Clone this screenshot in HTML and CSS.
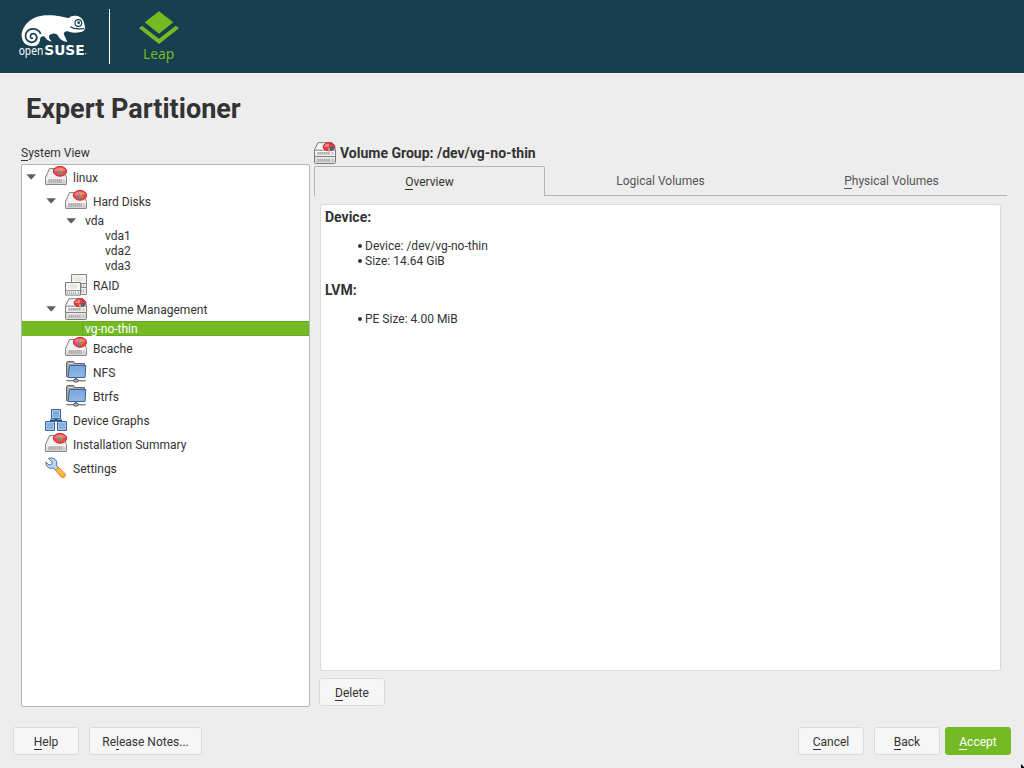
FILE: index.html
```html
<!DOCTYPE html>
<html lang="en">
<head>
<meta charset="utf-8">
<title>Expert Partitioner</title>
<link rel="stylesheet" href="styles.css">
</head>
<body>
<svg class="defs" width="0" height="0" aria-hidden="true">
  <defs>
    <linearGradient id="metal" x1="0" y1="0" x2="0" y2="1"><stop offset="0" stop-color="#fff"/><stop offset="1" stop-color="#cfcfcf"/></linearGradient>
    <linearGradient id="blue" x1="0" y1="0" x2="0" y2="1"><stop offset="0" stop-color="#78a5d8"/><stop offset="1" stop-color="#91b8e4"/></linearGradient>
    <symbol id="disk" viewBox="0 0 22 22">
      <path d="M4.500 2.500h13l4 9v6.500q0 .5-.5.500H1q-.5 0-.5-.500v-6.500z" fill="#e6e6e6" stroke="#858585"/>
      <path d="M5.300 3.500h11.500l3.200 7.500H1.900z" fill="#f3f3f3"/>
      <path d="M1 11.800h20v6H1z" fill="url(#metal)"/>
      <path d="M3 13h14v4H3zM18 13h1.500v4H18z" fill="#c3c3c3"/>
      <path d="M4.500 13v4M6.500 13v4M8.500 13v4M10.500 13v4M12.500 13v4M14.500 13v4M16.500 13v4" stroke="#a9a9a9" stroke-width=".7"/>
      <ellipse cx="15" cy="5.300" rx="6.600" ry="4.900" fill="#ea4a4c" stroke="#cc2428"/>
      <path d="M9.300 5q.5-3.200 5.700-3.500 5 .3 5.700 3.100-5 1.300-11.400.4z" fill="#f27a7a"/>
      <path d="M15 5l.4-3.300 1.800.6-.4 3z" fill="#e8a052"/>
      <path d="M12.500 5.600l2.500-.8v3.500l-2.500.2z" fill="#6a84bd"/>
      <path d="M15.300 4.600l3 1.900-3 1.800z" fill="#76a950"/>
    </symbol>
    <symbol id="volumes" viewBox="0 0 22 22">
      <path d="M4 .7h14l3.500 6.800v13q0 1-1 1h-19q-1 0-1-1v-13z" fill="#e8e8e8" stroke="#7c7c7c"/>
      <path d="M4.500 1.500h13l2.800 6H1.700z" fill="#f5f5f5"/>
      <path d="M1 8.500h20v5H1zM1 15.500h20v5H1z" fill="url(#metal)"/>
      <path d="M.5 8.200h21M.5 14.500h21" stroke="#858585"/>
      <path d="M3 10h13v2.500H3zM17.500 10h2v2.500h-2zM3 17h13v2.500H3zM17.500 17h2v2.500h-2z" fill="#c3c3c3"/>
      <path d="M4.500 10v2.500M6.500 10v2.500M8.500 10v2.500M10.500 10v2.500M12.500 10v2.500M14.500 10v2.500M4.500 17v2.500M6.500 17v2.500M8.500 17v2.500M10.500 17v2.500M12.500 17v2.500M14.500 17v2.500" stroke="#a5a5a5" stroke-width=".7"/>
      <ellipse cx="15" cy="4.800" rx="5.900" ry="4" fill="#e63a3d" stroke="#c81e22"/>
      <path d="M10 5q.5-3 5-3.400V5z" fill="#f58282"/>
      <path d="M15 5l1.500 3.700q3.500-.6 4-3.700z" fill="#3465a4"/>
      <path d="M15 5l1.500 3.700h-3z" fill="#e9a43c"/>
    </symbol>
    <symbol id="raid" viewBox="0 0 22 22">
      <path d="M6.500.5h15v20h-15z" fill="#eee" stroke="#888"/>
      <path d="M7 13.500h14.500M7 9.500h14.500" stroke="#888"/>
      <path d="M8 1.500h12.500V9H8z" fill="#f7f7f5"/>
      <ellipse cx="14" cy="5" rx="5" ry="2.800" fill="#e9e9e4"/>
      <path d="M16.500 10.700v1.800M18.500 10.700v1.800M16.500 15.500v3M18.500 15.500v3" stroke="#aaa"/>
      <path d="M.5 8.500h15v12.600H.5z" fill="#efefef" stroke="#7d7d7d"/>
      <path d="M2 9.500h12l.5 6.500h-13z" fill="#fafaf8"/>
      <ellipse cx="8" cy="12.500" rx="5" ry="2.500" fill="#e7e7e2"/>
      <path d="M1 16.500h14" stroke="#999"/>
      <path d="M2.500 17.500v2.500M4.500 17.500v2.500M6.500 17.500v2.500M8.500 17.500v2.500M10.500 17.500v2.500M13.500 17.500v2.500" stroke="#aaa"/>
    </symbol>
    <symbol id="folder" viewBox="0 0 22 22">
      <path d="M1.500 15.500v-14l1-1h6l1.500 2h9.500v13z" fill="#a3a3a0" stroke="#656565"/>
      <path d="M3 2.500h5M3 4.500h15" stroke="#d5d5d2"/>
      <path d="M4.500 4.500h16.300l-.8 12H3z" fill="url(#blue)" stroke="#3465a4"/>
      <path d="M10.500 17v2" stroke="#555"/>
      <path d="M1 19.500h20" stroke="#888"/>
      <path d="M2 20.500h18" stroke="#ccc"/>
      <ellipse cx="11" cy="19.500" rx="2.500" ry="1.500" fill="#bbb" stroke="#444"/>
    </symbol>
    <symbol id="graph" viewBox="0 0 22 22">
      <path d="M11 9v3M6 13.500v-2h10v2" fill="none" stroke="#27446b" stroke-width="2"/>
      <path d="M6.500.5h9v9h-9zM.5 12.500h9v9h-9zM12.500 12.500h9v9h-9z" fill="#86aedb" stroke="#3465a4"/>
      <path d="M7.500 1.500h7v7h-7zM1.500 13.500h7v7h-7zM13.500 13.500h7v7h-7z" fill="none" stroke="#b4cfee" stroke-width=".8"/>
    </symbol>
    <symbol id="tools" viewBox="0 0 22 22">
      <path d="M3.500 1.500L7.200 5 6.500 7.500 4 8 .8 5Q.5 9 3.500 10.800q2 1.200 4.700.2l3.300 3 2.500-2.500-2.500-3.200Q12.500 3.500 9 1.500 6.500.3 3.500 1.500z" fill="#bad3ef" stroke="#4a78ae"/>
      <path d="M10.300 13.200l3.200-2.800 6.200 5.800q1.600 2.200-.1 3.800-1.900 1.400-3.600-.2z" fill="#fcaf3e" stroke="#e58a0c"/>
      <path d="M13 13.500l4.700 4.700M15 13l4 4" stroke="#ffd98c" stroke-dasharray="1.500 1"/>
    </symbol>
    <symbol id="arrow" viewBox="0 0 10 6"><path d="M.4.300h9.600L5.700 5.200h-1z" fill="#606060"/></symbol>
  </defs>
</svg>

<header class="banner">
  <svg class="brand" viewBox="0 0 600 219">
    <path d="M65 111C63 78 94 48 137 46 168 44 187 51 207 54 212 47 222 46 232 48 245 51 253 63 254 77L256 85Q253 94 243 96 218 101 203 94 193 93 191 101L202 126Q181 123 172 104 161 96 148 105L147 114 155 125Q141 124 133 109 124 107 121 113 121 138 98 139 69 138 65 111z" fill="#fff"/>
    <path d="M122 102C115 84 88 80 78 100 72 121 91 133 106 123 116 112 107 97 95 102 87 109 92 117 99 114" fill="none" stroke="#173f4f" stroke-width="5"/>
    <circle cx="235" cy="69" r="10" fill="#fff" stroke="#173f4f" stroke-width="3.500"/>
    <circle cx="236" cy="68" r="4" fill="#173f4f"/>
    <path d="M211 80q14 10 42 5" fill="none" stroke="#173f4f" stroke-width="3.500"/>
    <text class="word-open" x="56" y="164" textLength="74" lengthAdjust="spacingAndGlyphs">open</text>
    <text class="word-suse" x="133" y="164" textLength="121" lengthAdjust="spacingAndGlyphs">SUSE</text>
    <circle cx="257" cy="161" r="2" fill="#fff"/>
    <path d="M327 27h3v165h-3z" fill="#fff"/>
    <path d="M477 34l43 33-43 34-43-34z" fill="#73ba25"/>
    <path d="M417 85l9-8 51 39 50-39 10 8-60 47z" fill="#73ba25"/>
    <text class="word-leap" x="429" y="178" textLength="94" lengthAdjust="spacingAndGlyphs">Leap</text>
  </svg>
</header>

<main class="page">
  <h1 class="title">Expert Partitioner</h1>
  <div class="columns">
    <section class="side">
      <div class="label"><u>S</u>ystem View</div>
      <ul class="tree">
        <li class="row"><svg class="arrow"><use href="#arrow"/></svg><svg class="icon"><use href="#disk"/></svg>linux</li>
        <li class="row l2"><svg class="arrow"><use href="#arrow"/></svg><svg class="icon"><use href="#disk"/></svg>Hard Disks</li>
        <li class="row l3 plain"><svg class="arrow"><use href="#arrow"/></svg>vda</li>
        <li class="row l4 plain">vda1</li>
        <li class="row l4 plain">vda2</li>
        <li class="row l4 plain">vda3</li>
        <li class="row l2 leaf"><svg class="icon"><use href="#raid"/></svg>RAID</li>
        <li class="row l2"><svg class="arrow"><use href="#arrow"/></svg><svg class="icon"><use href="#volumes"/></svg>Volume Management</li>
        <li class="row plain selected"><span>vg-no-thin</span></li>
        <li class="row l2 leaf"><svg class="icon"><use href="#disk"/></svg>Bcache</li>
        <li class="row l2 leaf"><svg class="icon"><use href="#folder"/></svg>NFS</li>
        <li class="row l2 leaf"><svg class="icon"><use href="#folder"/></svg>Btrfs</li>
        <li class="row leaf"><svg class="icon"><use href="#graph"/></svg>Device Graphs</li>
        <li class="row leaf"><svg class="icon"><use href="#disk"/></svg>Installation Summary</li>
        <li class="row leaf"><svg class="icon"><use href="#tools"/></svg>Settings</li>
      </ul>
    </section>
    <section class="detail">
      <h2 class="heading"><svg class="icon"><use href="#volumes"/></svg>Volume Group: /dev/vg-no-thin</h2>
      <nav class="tabs">
        <div class="tab active"><span><u>O</u>verview</span></div>
        <div class="tab">Logical Volumes</div>
        <div class="tab"><span><u>P</u>hysical Volumes</span></div>
      </nav>
      <article class="info">
        <h3>Device:</h3>
        <ul><li>Device: /dev/vg-no-thin</li><li>Size: 14.64 GiB</li></ul>
        <h3>LVM:</h3>
        <ul><li>PE Size: 4.00 MiB</li></ul>
      </article>
      <button class="btn delete"><span><u>D</u>elete</span></button>
    </section>
  </div>
</main>
<footer class="actions">
  <button class="btn"><span><u>H</u>elp</span></button>
  <button class="btn notes"><span>Re<u>l</u>ease Notes...</span></button>
  <button class="btn cancel"><span><u>C</u>ancel</span></button>
  <button class="btn"><span><u>B</u>ack</span></button>
  <button class="btn accept"><span><u>A</u>ccept</span></button>
</footer>
<svg class="pointer" viewBox="0 0 3 4"><path d="M0 0l3 3v1H0z"/></svg>
</body>
</html>
```
FILE: styles.css
```css
* { box-sizing: border-box; }
body {
  margin: 0;
  width: 1024px;
  height: 768px;
  overflow: hidden;
  display: flex;
  flex-direction: column;
  background: #ededed;
  color: #333;
  font: 12px/15px Roboto, sans-serif;
}
.defs { position: absolute; }
h1, h2, h3, ul { margin: 0; padding: 0; }
ul { list-style: none; }
u { text-decoration: none; box-shadow: 0 1px 0 currentColor; }

.banner { flex: none; height: 73px; background: #173f4f; }
.brand { display: block; width: 200px; height: 73px; }
.word-open { font: 40px "Noto Sans", sans-serif; fill: #fff; }
.word-suse { font: bold 42px "DejaVu Sans", sans-serif; fill: #fff; }
.word-leap { font: 43px "Noto Sans", sans-serif; fill: #73ba25; }

.page { flex: none; height: 634px; padding: 18px 17px 0 21px; }
.title { height: 50px; padding-left: 5px; font-size: 27px; line-height: 36px; font-weight: bold; }
.columns { display: flex; gap: 4px; }
.side { width: 289px; }
.label { height: 23px; padding-top: 5px; }
.tree {
  height: 543px;
  border: 1px solid #b5b5b5;
  border-radius: 2px;
  background: #fff;
}
.row { display: flex; align-items: center; height: 24px; padding: 2px 0 0 4px; }
.row.plain { height: 15px; }
.row.leaf { padding-left: 23px; }
.row.l2 { padding-left: 24px; }
.row.l2.leaf { padding-left: 43px; }
.row.l3 { padding-left: 44px; }
.row.l4 { padding-left: 83px; }
.row .arrow { width: 10px; height: 6px; margin: 0 9px 2px 0; }
.icon { flex: none; width: 22px; height: 22px; margin-right: 6px; }
.row .icon { margin-top: -2px; }
.row.selected { padding: 0 0 0 60px; background: #73ba25; color: #fff; }
.selected span { flex: 1; height: 15px; padding-left: 2px; border: 1px solid #68a922; border-right: 0; line-height: 14px; }

.detail { width: 693px; }
.heading { display: flex; align-items: center; height: 25px; font-size: 14px; font-weight: bold; }
.heading .icon { margin: -2px 4px 0 0; }
.tabs { display: flex; height: 30px; }
.tab {
  width: 231px;
  padding-top: 2px;
  display: flex;
  justify-content: center;
  align-items: center;
  border-bottom: 1px solid #b5b5b5;
  color: #555;
}
.tab.active { border: 1px solid #b5b5b5; border-bottom: 0; border-radius: 2px 2px 0 0; color: #333; }
.info {
  width: 681px;
  height: 467px;
  margin: 8px 0 7px 6px;
  padding: 4px;
  border: 1px solid #dadada;
  border-radius: 3px;
  background: #fff;
}
.info h3 { font-size: 14px; line-height: 17px; margin-bottom: 13px; }
.info ul { padding-left: 33px; margin-bottom: 13px; }
.info li { display: flex; align-items: center; gap: 3px; }
.info li::before { content: ""; width: 4px; height: 4px; margin-bottom: 2px; border-radius: 50%; background: #333; }

.btn {
  flex: none;
  width: 66px;
  height: 28px;
  padding: 3px 0 0;
  border: 1px solid #dadada;
  border-radius: 3px;
  background: #f6f6f6;
  color: #333;
  font: inherit;
}
.delete { display: block; margin-left: 5px; }
.actions { display: flex; gap: 10px; padding: 20px 13px 0; }
.notes { width: 113px; }
.cancel { margin-left: auto; }
.accept { margin-left: -5px; border-color: #73ba25; background: #73ba25; color: #fff; }
.pointer { position: absolute; right: 0; bottom: 0; width: 3px; height: 4px; }
```
